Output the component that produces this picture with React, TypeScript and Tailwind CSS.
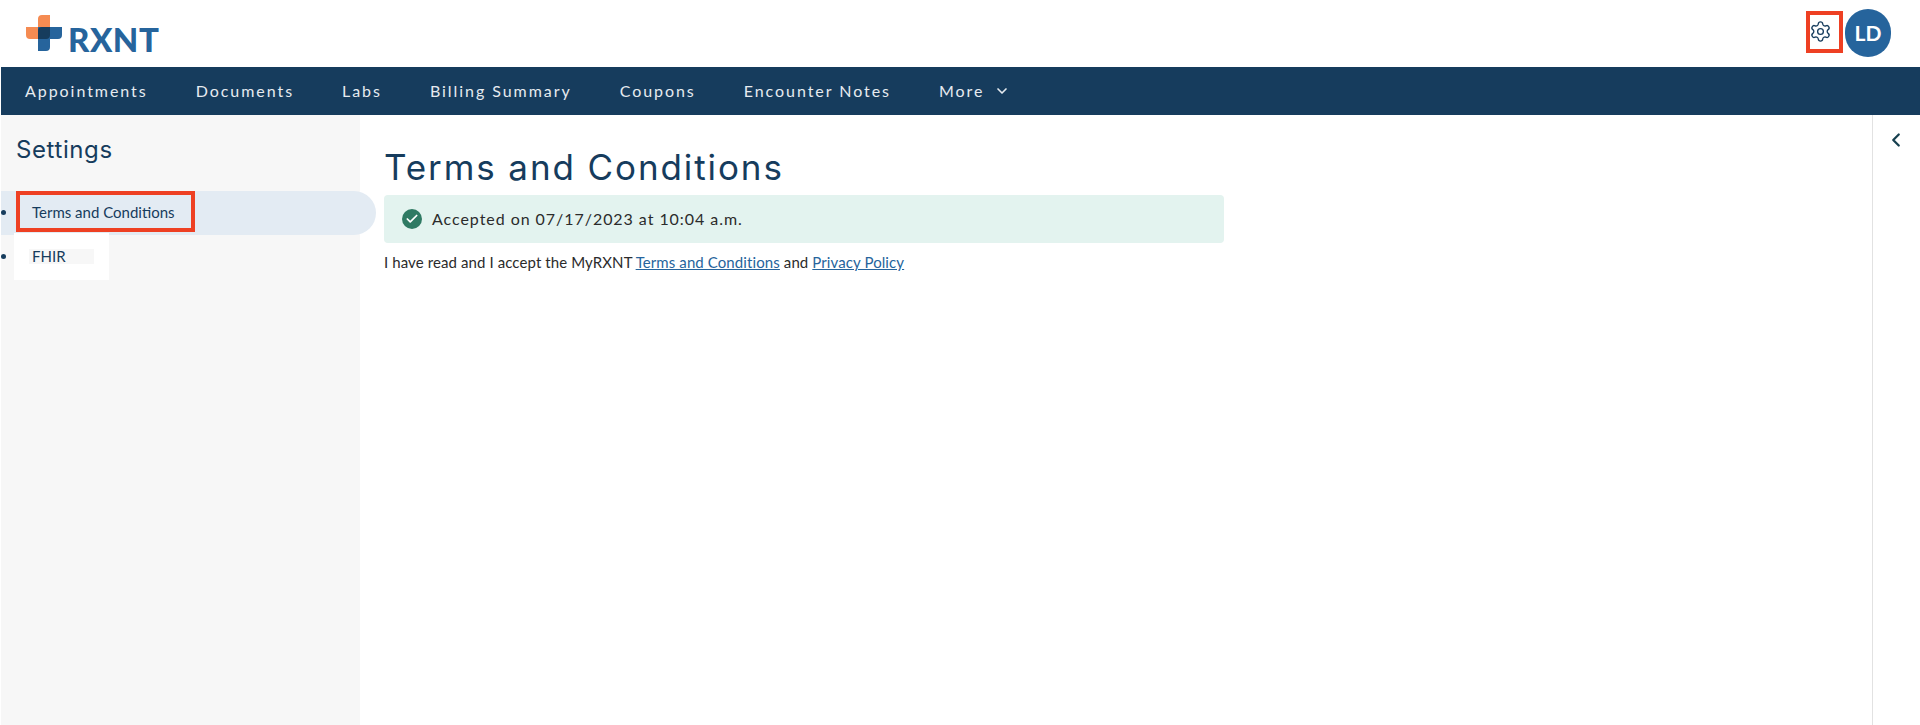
import { Settings, ChevronDown, ChevronLeft, Check } from 'lucide-react'

const NAV_ITEMS = ['Appointments', 'Documents', 'Labs', 'Billing Summary', 'Coupons', 'Encounter Notes']

function Logo() {
  return (
    <div className="flex items-end mt-[15px]">
      <svg width="36" height="36" viewBox="0 0 36 36" className="block">
        <path d="M12 4a4 4 0 0 1 4-4h8v24H4a4 4 0 0 1-4-4v-8h12z" fill="#f58b52" />
        <path d="M12 12h24v8a4 4 0 0 1-4 4h-8v8a4 4 0 0 1-4 4h-8z" fill="#26649c" />
        <path d="M16 12h8v8a4 4 0 0 1-4 4h-8v-8a4 4 0 0 1 4-4z" fill="#163c5d" />
      </svg>
      <span className="ml-[6px] text-[33px] leading-[24px] font-black tracking-[0.5px] text-[#26649c] font-['Lato',sans-serif]">RXNT</span>
    </div>
  )
}

function Header() {
  return (
    <header className="h-[67px] flex items-start justify-between pl-[26px] pr-[29px] bg-white">
      <Logo />
      <div className="flex items-start pt-[9px]">
        <div className="w-[37px] h-[42px] mt-[2px] mr-[2px] pb-[2px] flex items-center border-[4px] border-[#ee4023]">
          <Settings size={23} strokeWidth={1.4} className="text-[#163c5d] ml-[-1px]" />
        </div>
        <div className="w-[46px] h-[48px] rounded-full bg-[#26649c] text-white flex items-center justify-center text-[21px] font-bold">LD</div>
      </div>
    </header>
  )
}

function NavBar() {
  return (
    <nav className="h-[48px] ml-px bg-[#163c5d] flex items-center pl-[24px] gap-[48px] text-[16px] tracking-[1.95px] text-[#e6ebf0]">
      {NAV_ITEMS.map(item => (
        <span key={item}>{item}</span>
      ))}
      <span className="flex items-center gap-[10px]">
        More
        <ChevronDown size={16} strokeWidth={2.5} />
      </span>
    </nav>
  )
}

function Sidebar() {
  return (
    <aside className="w-[359px] shrink-0 ml-px bg-[#f7f7f7] pt-[20px] text-[#163c5d]">
      <h2 className="pl-[15px] text-[24px] leading-[30px] tracking-[0.6px] font-['Inter',sans-serif]">Settings</h2>
      <ul className="mt-[26px] text-[15px]">
        <li className="relative h-[44px] flex items-center w-[375px] pl-[31px] pb-[2px] rounded-r-[22px] bg-[#e3ebf3]">
          <span className="absolute left-0 top-[19px] w-[5px] h-[5px] rounded-full bg-[#163c5d]" />
          Terms and Conditions
          <span className="absolute left-[15px] top-0 w-[179px] h-[41px] border-[4px] border-[#ee4023]" />
        </li>
        <li className="relative h-[44px] flex items-center pl-[31px]">
          <span className="absolute left-0 top-[19px] w-[5px] h-[5px] rounded-full bg-[#163c5d]" />
          <span className="absolute left-[13px] top-[-2px] w-[95px] h-[47px] bg-white flex items-center pl-[15px]">
            <span className="w-[65px] h-[15px] leading-[15px] pl-[3px] bg-[#f7f7f7]">FHIR</span>
          </span>
        </li>
      </ul>
    </aside>
  )
}

function Content() {
  return (
    <main className="flex-1 pl-[24px] pt-[30px]">
      <h1 className="text-[35px] leading-[44px] tracking-[1.9px] text-[#163c5d] font-['Inter',sans-serif]">Terms and Conditions</h1>
      <div className="mt-[6px] w-[840px] h-[48px] rounded-[4px] bg-[#e3f3ef] flex items-center pl-[18px] gap-[10px] text-[16px] tracking-[0.95px] text-[#2b2b2b]">
        <span className="w-[20px] h-[20px] rounded-full bg-[#2f7a63] flex items-center justify-center">
          <Check size={14} strokeWidth={3} className="text-white" />
        </span>
        Accepted on 07/17/2023 at 10:04 a.m.
      </div>
      <p className="mt-[9px] text-[15px] leading-[20px] tracking-[0.1px] text-[#2b2b2b]">
        I have read and I accept the MyRXNT <a className="underline text-[#26649c]">Terms and Conditions</a> and <a className="underline text-[#26649c]">Privacy Policy</a>
      </p>
    </main>
  )
}

export default function App() {
  return (
    <div className="h-[725px] overflow-hidden bg-white flex flex-col font-['Lato',sans-serif]">
      <Header />
      <NavBar />
      <div className="flex flex-1">
        <Sidebar />
        <Content />
        <div className="w-[48px] border-l border-[#e2e2e2] pt-[14px] pl-[12px]">
          <ChevronLeft size={22} strokeWidth={2.5} className="text-[#17404f]" />
        </div>
      </div>
    </div>
  )
}
